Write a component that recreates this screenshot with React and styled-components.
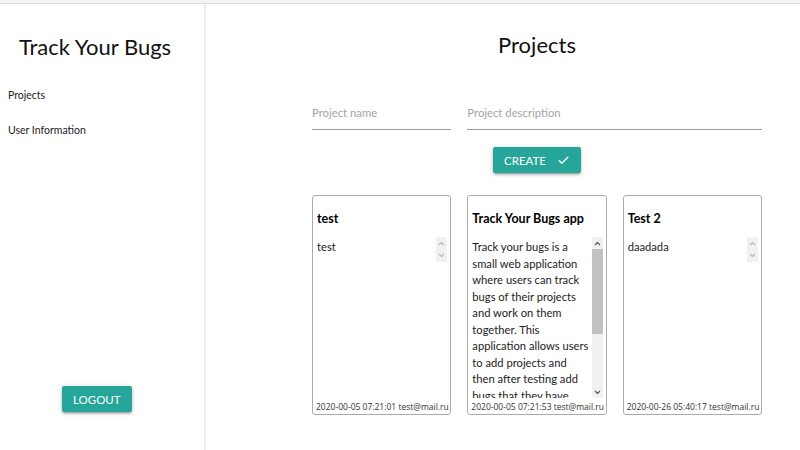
import React from "react";
import styled, { createGlobalStyle } from "styled-components";

const GlobalStyle = createGlobalStyle`
  html, body { margin: 0; padding: 0; background: #fff; }
  body { font-family: Lato, "Open Sans", sans-serif; color: #222; }
  * { box-sizing: border-box; }
`;

const Page = styled.div`
  width: 800px;
  height: 450px;
  display: flex;
  flex-direction: column;
  overflow: hidden;
`;

const TopStrip = styled.div`
  height: 4px;
  background: #f3f3f3;
  border-bottom: 1px solid #dcdcdc;
  flex: none;
`;

const Body = styled.div`
  flex: 1;
  display: flex;
`;

const Sidebar = styled.aside`
  width: 206px;
  flex: none;
  border-right: 2px solid #ececec;
  display: flex;
  flex-direction: column;
  padding: 28px 0 38px;
`;

const Brand = styled.h1`
  margin: 0 0 26px;
  font-weight: 400;
  font-size: 22px;
  line-height: 30px;
  text-align: center;
  padding-right: 14px;
  color: #111;
`;

const NavLink = styled.a`
  display: block;
  font-size: 10.5px;
  line-height: 14px;
  color: #222;
  padding: 0 8px;
  margin-bottom: 21px;
  text-decoration: none;
`;

const Button = styled.button`
  font-family: Lato, sans-serif;
  background: #26a69a;
  color: #fff;
  border: none;
  border-radius: 2px;
  font-size: 11.5px;
  text-transform: uppercase;
  height: 26px;
  padding: 0 ${(p) => p.$pad || 11}px;
  box-shadow: 0 2px 2px 0 rgba(0,0,0,0.14), 0 3px 1px -2px rgba(0,0,0,0.12), 0 1px 5px 0 rgba(0,0,0,0.2);
  display: inline-flex;
  align-items: center;
  gap: 11px;
  cursor: pointer;
`;

const LogoutWrap = styled.div`
  margin-top: auto;
  padding-left: 62px;
`;

const Main = styled.main`
  flex: 1;
  min-width: 0;
  padding: 0 38px 0 106px;
  display: flex;
  flex-direction: column;
`;

const Heading = styled.h2`
  margin: 26px 0 0;
  font-weight: 400;
  font-size: 22px;
  line-height: 30px;
  text-align: center;
  color: #111;
  height: 38px;
`;

const Grid = styled.div`
  display: grid;
  grid-template-columns: repeat(3, minmax(0, 1fr));
  column-gap: 16px;
`;

const Field = styled.input`
  grid-column: ${(p) => p.$span || "auto"};
  min-width: 0;
  width: 100%;
  border: none;
  border-bottom: 1px solid #9e9e9e;
  font-family: Lato, sans-serif;
  font-size: 11.3px;
  height: 30px;
  padding: 0 0 4px;
  outline: none;
  background: transparent;
  margin-top: 32px;
  &::placeholder { color: #a4a4a4; }
`;

const CreateRow = styled.div`
  display: flex;
  justify-content: center;
  margin: 17px 0 22px;
`;

const Card = styled.div`
  height: 220px;
  border: 1px solid #ababab;
  border-radius: 3px;
  display: flex;
  flex-direction: column;
  padding: 14px 3px 0 3px;
  min-width: 0;
`;

const CardTitle = styled.div`
  font-weight: 700;
  font-size: 12.5px;
  line-height: 18px;
  color: #000;
  height: 27px;
  padding-left: 1px;
`;

const DescBox = styled.div`
  display: flex;
  max-height: 161px;
  overflow: hidden;
`;

const DescText = styled.div`
  flex: 1;
  min-width: 0;
  font-size: 11.2px;
  line-height: 16.5px;
  color: #222;
  padding: 2px 1px 6px 1px;
`;

const ScrollTrack = styled.div`
  width: 11px;
  flex: none;
  background: #f1f1f1;
  display: flex;
  flex-direction: column;
`;

const ScrollArrow = styled.div`
  height: 12px;
  flex: none;
  display: flex;
  align-items: center;
  justify-content: center;
`;

const ScrollRail = styled.div`
  flex: 1;
`;

const Thumb = styled.div`
  background: #c1c1c1;
  width: 100%;
`;

const Footer = styled.div`
  margin-top: auto;
  font-family: "Open Sans", sans-serif;
  font-size: 8.5px;
  line-height: 12px;
  padding-bottom: 1px;
  color: #333;
  white-space: nowrap;
`;

const Chevron = ({ up, color }) => (
  <svg width="7" height="5" viewBox="0 0 7 5">
    <path d={up ? "M1 4 L3.5 1.5 L6 4" : "M1 1 L3.5 3.5 L6 1"} fill="none" stroke={color} strokeWidth="1.1" />
  </svg>
);

const Description = ({ text, thumb }) => {
  const color = thumb ? "#505050" : "#b5b5b5";
  return (
    <DescBox>
      <DescText>{text}</DescText>
      <ScrollTrack>
        <ScrollArrow><Chevron up color={color} /></ScrollArrow>
        <ScrollRail>{thumb ? <Thumb style={{ height: `${thumb}%` }} /> : null}</ScrollRail>
        <ScrollArrow><Chevron color={color} /></ScrollArrow>
      </ScrollTrack>
    </DescBox>
  );
};

const CheckIcon = () => (
  <svg width="13" height="13" viewBox="0 0 24 24" fill="none" stroke="#fff" strokeWidth="2.6" strokeLinecap="round" strokeLinejoin="round">
    <path d="M20 6 9 17l-5-5" />
  </svg>
);

const projects = [
  { title: "test", description: "test", footer: "2020-00-05 07:21:01 test@mail.ru" },
  {
    title: "Track Your Bugs app",
    description:
      "Track your bugs is a small web application where users can track bugs of their projects and work on them together. This application allows users to add projects and then after testing add bugs that they have found so that other users can see them and fix them.",
    footer: "2020-00-05 07:21:53 test@mail.ru",
    thumb: 62,
  },
  { title: "Test 2", description: "daadada", footer: "2020-00-26 05:40:17 test@mail.ru" },
];

export default function App() {
  return (
    <Page>
      <GlobalStyle />
      <TopStrip />
      <Body>
        <Sidebar>
          <Brand>Track Your Bugs</Brand>
          <NavLink href="#">Projects</NavLink>
          <NavLink href="#">User Information</NavLink>
          <LogoutWrap>
            <Button>Logout</Button>
          </LogoutWrap>
        </Sidebar>
        <Main>
          <Heading>Projects</Heading>
          <Grid>
            <Field placeholder="Project name" />
            <Field placeholder="Project description" $span="span 2" />
          </Grid>
          <CreateRow>
            <Button>
              Create <CheckIcon />
            </Button>
          </CreateRow>
          <Grid>
            {projects.map((p) => (
              <Card key={p.title}>
                <CardTitle>{p.title}</CardTitle>
                <Description text={p.description} thumb={p.thumb} />
                <Footer>{p.footer}</Footer>
              </Card>
            ))}
          </Grid>
        </Main>
      </Body>
    </Page>
  );
}
